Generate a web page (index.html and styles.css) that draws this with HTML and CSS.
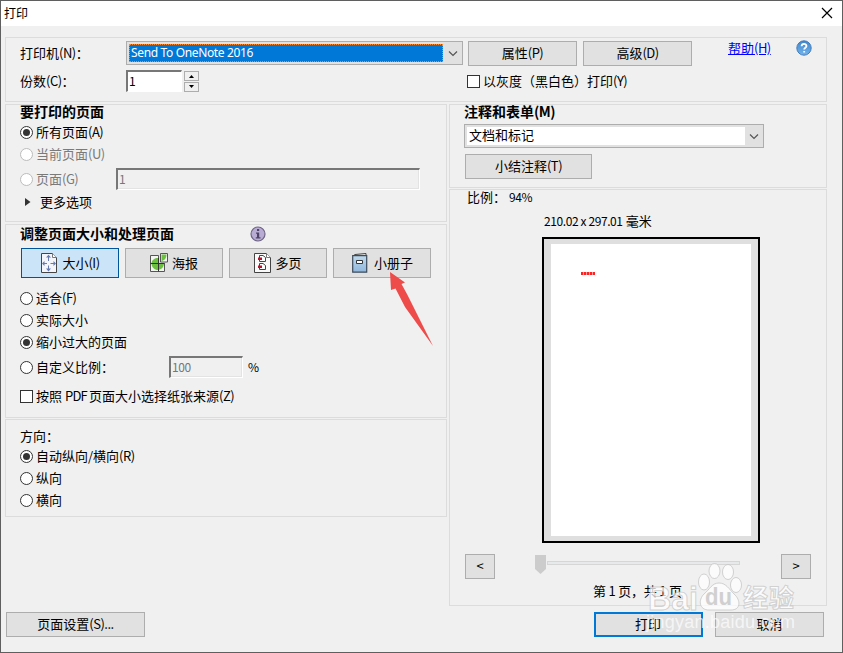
FILE: index.html
```
<!DOCTYPE html>
<html lang="zh-CN">

<head>
    <meta charset="UTF-8">
    <title>打印</title>
    <link rel="stylesheet" href="styles.css">
</head>

<body>
    <div class="dialog">
        <div class="titlebar">
            <span>打印</span>
            <svg class="close" width="12" height="12" viewBox="0 0 12 12"><path d="M1 1l10 10M11 1L1 11" stroke="#000" stroke-width="1.2"/></svg>
        </div>

        <div class="group printer">
            <div class="printer-row">
                <span class="caption">打印机<span class="key">(N)</span>：</span>
                <div class="select select-printer">
                    <span class="value selected">Send To OneNote 2016</span>
                    <svg width="18" height="18" viewBox="0 0 18 18"><path d="M5 7.500l4 4 4-4" fill="none" stroke="#555" stroke-width="1.2"/></svg>
                </div>
                <button class="btn btn-props">属性<span class="key">(P)</span></button>
                <button class="btn btn-adv">高级<span class="key">(D)</span></button>
                <a class="help" href="#">帮助<span class="key">(H)</span></a>
                <svg class="help-icon" width="16" height="16" viewBox="0 0 16 16">
                    <defs>
                        <linearGradient id="blue" x1="0" y1="0" x2="0" y2="1"><stop offset="0" stop-color="#3f86cd"/><stop offset="1" stop-color="#73b4ea"/></linearGradient>
                    </defs>
                    <circle cx="8" cy="8" r="7.2" fill="url(#blue)" stroke="#427dbd"/>
                    <path d="M5.6 6.3c0-3.2 4.9-3.1 4.9-.3 0 1.8-2.3 1.8-2.3 3.5M8.2 11v1.6" fill="none" stroke="#fff" stroke-width="1.8"/>
                </svg>
            </div>
            <div class="copies-row">
                <span class="caption">份数<span class="key">(C)</span>：</span>
                <div class="field field-copies">1</div>
                <div class="spin">
                    <i><svg width="7" height="4" viewBox="0 0 7 4"><path d="M1 4l2.5-3L6 4z"/></svg></i>
                    <i><svg width="7" height="4" viewBox="0 0 7 4"><path d="M1 0l2.5 3L6 0z"/></svg></i>
                </div>
                <span class="box"></span>
                <span class="box-label">以灰度（黑白色）打印<span class="key">(Y)</span></span>
            </div>
        </div>

        <div class="columns">
            <div class="left">
                <div class="group pages">
                    <h2>要打印的页面</h2>
                    <div class="option"><i class="radio on"></i>所有页面<span class="key">(A)</span></div>
                    <div class="option off"><i class="radio"></i>当前页面<span class="key">(U)</span></div>
                    <div class="option off option-range"><i class="radio"></i><span class="range-label">页面<span class="key">(G)</span></span><div class="field field-off field-range">1</div></div>
                    <div class="more"><svg width="6" height="8" viewBox="0 0 6 8"><path d="M0 0l5.5 4L0 8z" fill="#333"/></svg>更多选项</div>
                </div>

                <div class="group sizing">
                    <div class="sizing-head">
                        <h2>调整页面大小和处理页面</h2>
                        <svg width="16" height="16" viewBox="0 0 16 16">
                            <circle cx="8" cy="8" r="7" fill="#b9acd4" stroke="#6e6484" stroke-width="1.2"/>
                            <path d="M7 3h2.2v2H7zM6 6.5h3.2v4.8h1.3v1.2H5.8v-1.2H7V7.700H6z" fill="#4f4468"/>
                        </svg>
                    </div>
                    <div class="modes">
                        <button class="btn mode active">
                            <svg width="18" height="20" viewBox="0 0 18 20">
                                <path d="M1.500.5h11l4 4v15h-15z" fill="#f4f5fa" stroke="#444"/>
                                <path d="M12.500.5v4h4" fill="#fff" stroke="#777"/>
                                <path d="M8.500 4V8M8.500 12.500v4M4 10.500H7M10.500 10.500H14" stroke="#667bb3"/>
                                <path d="M6 4.500L8.500 1.800 11 4.500zM6 15.500l2.500 3 2.500-3zM4.500 8v5L2 10.500zM13.500 8v5l2.500-2.500z" fill="#667bb3"/>
                            </svg>大小<span class="key">(I)</span>
                        </button>
                        <button class="btn mode">
                            <svg width="18" height="20" viewBox="0 0 18 20">
                                <path d="M.5 2.500h8v16h-8zM8.500 10.500h6v8h-6zM10.500.5h7v8.500h-7z" fill="#f4f4f4" stroke="#555"/>
                                <path d="M8 5v5H1.500C2 7 4.500 5 8 5zM1.500 11H8v6C4.500 17 2 14.500 1.500 11zM9 11h5c-.4 3-2 5-5 5.800zM11.500 1.500H16.500c0 3.500-2 6-5 6.500z" fill="#6cc040"/>
                                <path d="M8.500 5v13.500M.5 10.500h14" stroke="#333"/>
                            </svg>海报
                        </button>
                        <button class="btn mode">
                            <svg width="17" height="20" viewBox="0 0 17 20">
                                <path d="M.5.5h12l4 4v15H.5z" fill="#fafafa" stroke="#444"/>
                                <path d="M12.500.5v4h4" fill="#fff" stroke="#777"/>
                                <path d="M5.500 2.500H9l2.500 2v4h-6zM5.500 10.500H9l2.500 2v4h-6z" fill="#fff" stroke="#444"/>
                                <path d="M4 4.500h4V7H4zM4 12.500h4V15H4z" fill="#b3142d"/>
                            </svg>多页
                        </button>
                        <button class="btn mode mode-book">
                            <svg width="16" height="20" viewBox="0 0 16 20">
                                <defs>
                                    <linearGradient id="cover" x1="0" y1="0" x2="0" y2="1"><stop offset="0" stop-color="#bfdaec"/><stop offset="1" stop-color="#8fb6dc"/></linearGradient>
                                </defs>
                                <path d="M1 3l2-1.500L14 .5V3" fill="#eee" stroke="#444"/>
                                <path d="M.7 2.700h14v16.500H.7z" fill="url(#cover)" stroke="#3d4c5c" stroke-width="1.200"/>
                                <path d="M4.500 7.500h6v3h-6z" fill="#fff" stroke="#333"/>
                            </svg>小册子
                        </button>
                    </div>
                    <div class="option"><i class="radio"></i>适合<span class="key">(F)</span></div>
                    <div class="option"><i class="radio"></i>实际大小</div>
                    <div class="option"><i class="radio on"></i>缩小过大的页面</div>
                    <div class="option option-scale"><i class="radio"></i><span class="scale-label">自定义比例：</span><div class="field field-off field-scale">100</div><span class="unit">%</span></div>
                    <div class="option option-source"><i class="box"></i>按照<span class="key pdf">PDF</span>页面大小选择纸张来源<span class="key">(Z)</span></div>
                </div>

                <div class="group orientation">
                    <div class="orientation-title">方向：</div>
                    <div class="option"><i class="radio on"></i>自动纵向/横向<span class="key">(R)</span></div>
                    <div class="option"><i class="radio"></i>纵向</div>
                    <div class="option"><i class="radio"></i>横向</div>
                </div>
            </div>

            <div class="right">
                <div class="group comments">
                    <h2>注释和表单<span class="key">(M)</span></h2>
                    <div class="select select-comments">
                        <span class="value">文档和标记</span>
                        <svg width="18" height="18" viewBox="0 0 18 18"><path d="M5 7.500l4 4 4-4" fill="none" stroke="#555" stroke-width="1.2"/></svg>
                    </div>
                    <button class="btn btn-summary">小结注释<span class="key">(T)</span></button>
                </div>

                <div class="group preview">
                    <div class="ratio">比例：<span class="percent">94%</span></div>
                    <div class="paper-size"><span class="mm">210.02 x 297.01</span>毫米</div>
                    <div class="paper">
                        <div class="sheet"><span class="sheet-text"></span></div>
                    </div>
                    <div class="pager">
                        <button class="btn btn-page">&lt;</button>
                        <div class="slider">
                            <svg width="12" height="19" viewBox="0 0 12 19"><path d="M0 0h11v14l-5.500 5L0 14z" fill="#ccc"/></svg>
                            <div class="track"></div>
                        </div>
                        <button class="btn btn-page">&gt;</button>
                    </div>
                    <div class="page-count">第 1 页，共 1 页</div>
                </div>
            </div>
        </div>

        <div class="footer">
            <button class="btn btn-setup">页面设置<span class="key">(S)...</span></button>
            <button class="btn btn-print">打印</button>
            <button class="btn btn-cancel">取消</button>
        </div>

        <svg class="arrow" width="46" height="78" viewBox="0 0 46 78"><path d="M1 1l15 10.500-3.500 1.500 6 11L44 75 16 36 6.500 17.500 2 19z" fill="#ee4b4b"/></svg>

        <svg class="watermark" width="160" height="76" viewBox="0 0 160 76">
            <g class="wm-mark">
                <text x="6" y="50" class="wm-logo" textLength="50" lengthAdjust="spacingAndGlyphs">Bai</text>
                <ellipse cx="62" cy="22" rx="5.500" ry="8"/>
                <ellipse cx="72.500" cy="11" rx="5.500" ry="7.500"/>
                <ellipse cx="86" cy="12" rx="5.500" ry="7.500"/>
                <ellipse cx="94" cy="25" rx="5.500" ry="7.500"/>
                <path d="M77 23c7 0 10 6 15 11 7 6 7 16-3 16H67c-10 0-11-10-5-16 6-5 8-11 15-11z"/>
                <text x="101" y="47" class="wm-name" textLength="51">经验</text>
            </g>
            <text x="63" y="45" class="wm-du" textLength="27" lengthAdjust="spacingAndGlyphs">du</text>
            <text x="4" y="68" class="wm-url" textLength="149">jingyan.baidu.com</text>
        </svg>
    </div>
</body>

</html>
```
FILE: styles.css
```
* {
    box-sizing: border-box;
}

body {
    margin: 0;
    font: 13px/18px "Noto Sans CJK SC", sans-serif;
    color: #000;
}

i {
    font-style: normal;
}

svg {
    display: block;
    flex: none;
}

h2 {
    margin: -3px 0 0;
    font-size: 14px;
    line-height: 19px;
    font-weight: bold;
    white-space: nowrap;
}

/* latin parts of the labels are set a bit tighter */
.key {
    letter-spacing: -0.5px;
}

.dialog {
    position: relative;
    width: 843px;
    height: 653px;
    border: 1px solid #5f5f5f;
    background-color: #f0f0f0;
    overflow: hidden;
}

.titlebar {
    display: flex;
    justify-content: space-between;
    align-items: center;
    height: 25px;
    padding: 0 9px 1px 3px;
    background-color: #fff;
    font-size: 12px;
}

.group {
    border: 1px solid #dcdcdc;
}

.printer {
    width: 822px;
    height: 65px;
    margin: 11px 0 2px 4px;
    padding: 3px 0 0 14px;
}

.printer-row,
.copies-row {
    display: flex;
    align-items: flex-start;
    white-space: nowrap;
}

.printer-row {
    height: 28px;
}

.caption {
    width: 106px;
    padding-top: 3px;
}

.select {
    display: flex;
    align-items: center;
    height: 24px;
    padding: 2px 0 2px 2px;
    border: 1px solid #adadad;
    background-color: #e1e1e1;
}

.value {
    flex: 1;
    height: 18px;
    padding-left: 2px;
    background-color: #fff;
    line-height: 16px;
}

.selected {
    padding-left: 1px;
    border: 1px dotted #ff8728;
    background-color: #0078d7;
    color: #fff;
    font: 12px/16px "Noto Sans", sans-serif;
    letter-spacing: -0.35px;
}

.select-printer {
    width: 337px;
}

.select-printer svg {
    margin-left: 1px;
}

.btn {
    display: flex;
    flex: none;
    align-items: center;
    justify-content: center;
    height: 25px;
    padding: 0 0 1px;
    border: 1px solid #adadad;
    background-color: #e1e1e1;
    font: inherit;
    color: #000;
}

.btn-props {
    width: 109px;
    margin-left: 5px;
}

.btn-adv {
    width: 109px;
    margin-left: 6px;
}

.help {
    width: 68px;
    margin: -2px 0 0 36px;
    color: #00f;
}

.help-icon {
    margin-top: -1px;
}

.field {
    height: 22px;
    padding: 0 2px;
    border: 1px solid #fff;
    border-top: 2px solid #777;
    border-left: 2px solid #777;
    background-color: #fff;
    line-height: 18px;
}

.field-off {
    padding-left: 1px;
    background-color: #f0f0f0;
    color: #777;
    font-size: 12px;
    letter-spacing: -0.4px;
    line-height: 17px;
    box-shadow: inset -1px -1px #e3e3e3;
}

.field-copies {
    width: 56px;
    margin-top: 1px;
    padding-left: 1px;
    font-size: 12px;
}

.spin {
    display: flex;
    flex-direction: column;
    gap: 1px;
    margin: 2px 0 0 2px;
}

.spin i {
    display: flex;
    align-items: center;
    justify-content: center;
    width: 15px;
    height: 10px;
    border: 1px solid #adadad;
}

.box {
    flex: none;
    width: 13px;
    height: 13px;
    border: 1px solid #333;
    background-color: #fff;
}

.copies-row .box {
    margin: 6px 3px 0 268px;
}

.box-label {
    padding-top: 3px;
}

.columns {
    display: flex;
    align-items: flex-start;
    gap: 2px;
    padding-left: 4px;
}

.left {
    width: 442px;
}

.right {
    width: 378px;
}

.left .group {
    padding-left: 14px;
}

.pages {
    height: 118px;
    margin-bottom: 2px;
}

.option {
    display: flex;
    align-items: center;
    height: 22px;
    white-space: nowrap;
}

.radio {
    display: flex;
    align-items: center;
    justify-content: center;
    flex: none;
    width: 13px;
    height: 13px;
    margin-right: 3px;
    border: 1px solid #333;
    border-radius: 50%;
    background-color: #fff;
}

.on::after {
    content: "";
    width: 7px;
    height: 7px;
    border-radius: 50%;
    background-color: #333;
}

.off {
    color: #7a7a7a;
}

.off .radio {
    border-color: #bcbcbc;
}

.option-range {
    height: 28px;
}

.range-label {
    width: 80px;
}

.field-range {
    width: 304px;
}

.more {
    display: flex;
    align-items: center;
    gap: 9px;
    padding-left: 5px;
    height: 18px;
}

.sizing {
    height: 194px;
    margin-bottom: 1px;
}

.sizing-head {
    display: flex;
    justify-content: space-between;
    width: 246px;
    height: 23px;
}

.sizing-head h2 {
    margin-top: -1px;
}

.sizing-head svg {
    margin-top: 1px;
}

.modes {
    display: flex;
    gap: 6px;
    padding-left: 1px;
    margin-bottom: 9px;
}

.mode {
    width: 98px;
    height: 30px;
    gap: 4px;
}

.mode .key {
    margin-left: -4px;
}

.mode-book {
    padding-left: 1px;
    gap: 6px;
}

.active {
    border-color: #005499;
    background-color: #cce4f7;
}

.option-scale {
    height: 28px;
}

.scale-label {
    width: 133px;
}

.field-scale {
    width: 74px;
    margin-right: 5px;
}

.unit {
    font-size: 12px;
}

.option-source {
    height: 30px;
}

.option-source .box {
    margin-right: 3px;
}

.pdf {
    margin: 0 2px 0 3px;
    letter-spacing: -0.8px;
}

.orientation {
    height: 98px;
}

.orientation-title {
    padding-top: 7px;
    height: 25px;
}

.comments {
    height: 84px;
    margin-bottom: 1px;
    padding-left: 14px;
}

.select-comments {
    width: 300px;
    margin: 3px 0 6px;
}

.btn-summary {
    width: 127px;
    margin-left: 1px;
}

.preview {
    height: 417px;
    padding-left: 15px;
}

.ratio {
    margin-top: -2px;
    padding-left: 2px;
    height: 24px;
}

.percent {
    margin-left: 3px;
    font-size: 12px;
    letter-spacing: -0.4px;
}

.paper-size {
    padding-left: 79px;
    height: 25px;
}

.mm {
    margin-right: 3px;
    font-size: 12px;
    letter-spacing: -0.4px;
}

.paper {
    width: 218px;
    height: 306px;
    margin-left: 77px;
    padding: 5px 7px;
    border: 2px solid #000;
    background-color: #dfdfdf;
}

.sheet {
    width: 200px;
    height: 292px;
    padding: 28px 0 0 30px;
    background-color: #fff;
}

.sheet-text {
    display: block;
    width: 14px;
    height: 3px;
    background: repeating-linear-gradient(90deg, #f22 0 2px, #f99 2px 3px);
}

.pager {
    display: flex;
    align-items: center;
    margin-top: 11px;
}

.btn-page {
    width: 30px;
}

.slider {
    display: flex;
    align-items: flex-start;
    width: 286px;
    height: 25px;
    padding: 1px 0 0 40px;
}

.track {
    width: 193px;
    height: 4px;
    margin-top: 6px;
    border: 1px solid #d6d6d6;
    background-color: #e7eaea;
}

.page-count {
    padding: 3px 0 0 128px;
    letter-spacing: -0.2px;
}

.footer {
    display: flex;
    margin: 6px 0 0 5px;
}

.btn-setup {
    width: 139px;
}

.btn-print {
    width: 109px;
    margin-left: 449px;
    padding-right: 1px;
    border: 2px solid #0078d7;
}

.btn-cancel {
    width: 109px;
    margin-left: 12px;
}

.arrow {
    position: absolute;
    left: 388px;
    top: 270px;
}

.watermark {
    position: absolute;
    left: 641px;
    top: 559px;
}

.wm-mark {
    fill: #fff;
    fill-opacity: 0.75;
    stroke: #bbb;
    stroke-opacity: 0.65;
}

.wm-logo {
    font: bold 34px "Liberation Sans", sans-serif;
}

.wm-name {
    font: bold 25px "Noto Sans CJK SC", sans-serif;
}

.wm-du {
    font: bold 24px "Liberation Sans", sans-serif;
    fill: #d0d0d0;
}

.wm-url {
    font: 18px "Liberation Sans", sans-serif;
    fill: #fff;
    fill-opacity: 0.7;
}
```
